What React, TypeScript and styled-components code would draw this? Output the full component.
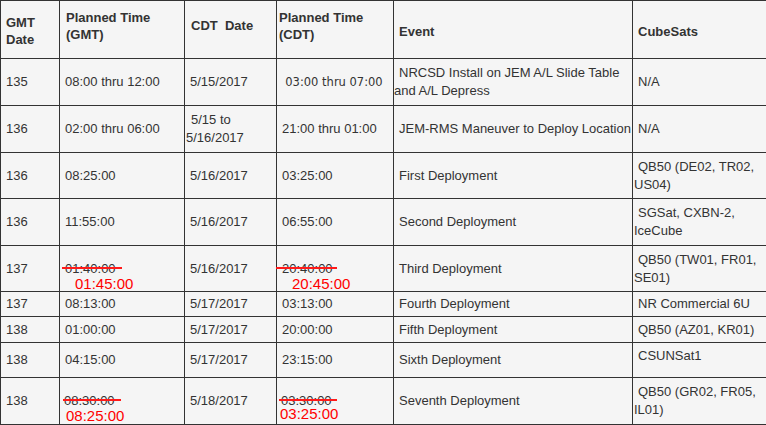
import React from "react";
import styled, { createGlobalStyle } from "styled-components";

const Global = createGlobalStyle`
  html, body { margin: 0; padding: 0; background: #f5f5f5; }
  body { font-family: "Liberation Sans", Arial, sans-serif; }
`;

const Table = styled.table`
  width: 766px;
  table-layout: fixed;
  border-collapse: collapse;
  background: #f5f5f5;
  color: #333;
  font-family: "Liberation Sans", Arial, sans-serif;
  font-size: 13px;
`;

const Row = styled.tr<{ $h: number }>`
  height: ${(p) => p.$h}px;
`;

const Head = styled.th<{ $pb?: number; $pt?: number; $pl?: number }>`
  border: 1px solid #333;
  padding: ${(p) => p.$pt ?? 0}px 4px ${(p) => p.$pb ?? 0}px ${(p) => p.$pl ?? 5}px;
  text-align: left;
  vertical-align: middle;
  font-weight: bold;
  line-height: 17px;
`;

const Cell = styled.td<{ $pl?: number; $indent?: number; $pb?: number; $center?: boolean; $nowrap?: boolean }>`
  border: 1px solid #333;
  padding: 0 2px ${(p) => p.$pb ?? 0}px ${(p) => p.$pl ?? 5}px;
  text-indent: ${(p) => p.$indent ?? 0}px;
  text-align: ${(p) => (p.$center ? "center" : "left")};
  vertical-align: middle;
  line-height: 18px;
  white-space: ${(p) => (p.$nowrap ? "nowrap" : "normal")};
  overflow: visible;
`;

const Verdana = styled.span`
  font-family: "DejaVu Sans", Verdana, sans-serif;
  font-size: 11.5px;
`;

const Struck = styled.span<{ $l: number; $w: number }>`
  position: relative;
  display: inline-block;
  line-height: 15px;
  text-indent: 0;
  &::after {
    content: "";
    position: absolute;
    left: ${(p) => p.$l}px;
    width: ${(p) => p.$w}px;
    top: 6px;
    height: 2px;
    background: #ff1a1a;
  }
`;

const Correction = styled.span<{ $dx: number; $dy: number }>`
  position: absolute;
  left: ${(p) => p.$dx}px;
  top: ${(p) => p.$dy}px;
  color: #ff0000;
  font-size: 15px;
  line-height: 17px;
  white-space: nowrap;
`;

type Fix = { old: string; fix: string; l: number; w: number; dx: number; dy: number };

const Amended = ({ f }: { f: Fix }) => (
  <Struck $l={f.l} $w={f.w}>
    {f.old}
    <Correction $dx={f.dx} $dy={f.dy}>{f.fix}</Correction>
  </Struck>
);

export default function App() {
  return (
    <>
      <Global />
      <Table>
        <colgroup>
          <col style={{ width: 59 }} />
          <col style={{ width: 125 }} />
          <col style={{ width: 92 }} />
          <col style={{ width: 117 }} />
          <col style={{ width: 239 }} />
          <col style={{ width: 134 }} />
        </colgroup>
        <thead>
          <Row $h={58}>
            <Head $pt={3}>GMT<br />Date</Head>
            <Head $pl={6} $pb={7}>Planned Time<br />(GMT)</Head>
            <Head $pl={6} $pb={8}>CDT{"\u00a0 "}Date</Head>
            <Head $pl={2} $pb={7}>Planned Time<br />(CDT)</Head>
            <Head $pt={3}>Event</Head>
            <Head $pt={3}>CubeSats</Head>
          </Row>
        </thead>
        <tbody>
          <Row $h={47}>
            <Cell>135</Cell>
            <Cell>08:00 thru 12:00</Cell>
            <Cell>5/15/2017</Cell>
            <Cell $center $pl={0}><Verdana>03:00 thru 07:00</Verdana></Cell>
            <Cell $pl={0} $indent={5}>NRCSD Install on JEM A/L Slide Table and A/L Depress</Cell>
            <Cell>N/A</Cell>
          </Row>
          <Row $h={47}>
            <Cell>136</Cell>
            <Cell>02:00 thru 06:00</Cell>
            <Cell $pl={1} $indent={5}>5/15 to 5/16/2017</Cell>
            <Cell>21:00 thru 01:00</Cell>
            <Cell $nowrap>JEM-RMS Maneuver to Deploy Location</Cell>
            <Cell>N/A</Cell>
          </Row>
          <Row $h={46}>
            <Cell>136</Cell>
            <Cell>08:25:00</Cell>
            <Cell>5/16/2017</Cell>
            <Cell>03:25:00</Cell>
            <Cell>First Deployment</Cell>
            <Cell $pl={1} $indent={4}>QB50 (DE02, TR02, US04)</Cell>
          </Row>
          <Row $h={47}>
            <Cell>136</Cell>
            <Cell>11:55:00</Cell>
            <Cell>5/16/2017</Cell>
            <Cell>06:55:00</Cell>
            <Cell>Second Deployment</Cell>
            <Cell $pl={1} $indent={4}>SGSat, CXBN-2, IceCube</Cell>
          </Row>
          <Row $h={46}>
            <Cell>137</Cell>
            <Cell>
              <Amended f={{ old: "01:40:00", fix: "01:45:00", l: -3, w: 60, dx: 10, dy: 14 }} />
            </Cell>
            <Cell>5/16/2017</Cell>
            <Cell>
              <Amended f={{ old: "20:40:00", fix: "20:45:00", l: -6, w: 61, dx: 10, dy: 14 }} />
            </Cell>
            <Cell>Third Deployment</Cell>
            <Cell $pl={1} $indent={4}>QB50 (TW01, FR01, SE01)</Cell>
          </Row>
          <Row $h={25}>
            <Cell>137</Cell>
            <Cell>08:13:00</Cell>
            <Cell>5/17/2017</Cell>
            <Cell>03:13:00</Cell>
            <Cell>Fourth Deployment</Cell>
            <Cell>NR Commercial 6U</Cell>
          </Row>
          <Row $h={26}>
            <Cell>138</Cell>
            <Cell>01:00:00</Cell>
            <Cell>5/17/2017</Cell>
            <Cell>20:00:00</Cell>
            <Cell>Fifth Deployment</Cell>
            <Cell>QB50 (AZ01, KR01)</Cell>
          </Row>
          <Row $h={35}>
            <Cell>138</Cell>
            <Cell>04:15:00</Cell>
            <Cell>5/17/2017</Cell>
            <Cell>23:15:00</Cell>
            <Cell>Sixth Deployment</Cell>
            <Cell $pb={9}>CSUNSat1</Cell>
          </Row>
          <Row $h={47}>
            <Cell>138</Cell>
            <Cell $pl={4}>
              <Amended f={{ old: "08:30:00", fix: "08:25:00", l: -1, w: 58, dx: 2, dy: 14 }} />
            </Cell>
            <Cell>5/18/2017</Cell>
            <Cell $pl={4}>
              <Amended f={{ old: "03:30:00", fix: "03:25:00", l: -2, w: 58, dx: -1, dy: 12 }} />
            </Cell>
            <Cell>Seventh Deployment</Cell>
            <Cell $pl={1} $indent={4}>QB50 (GR02, FR05, IL01)</Cell>
          </Row>
        </tbody>
      </Table>
    </>
  );
}
